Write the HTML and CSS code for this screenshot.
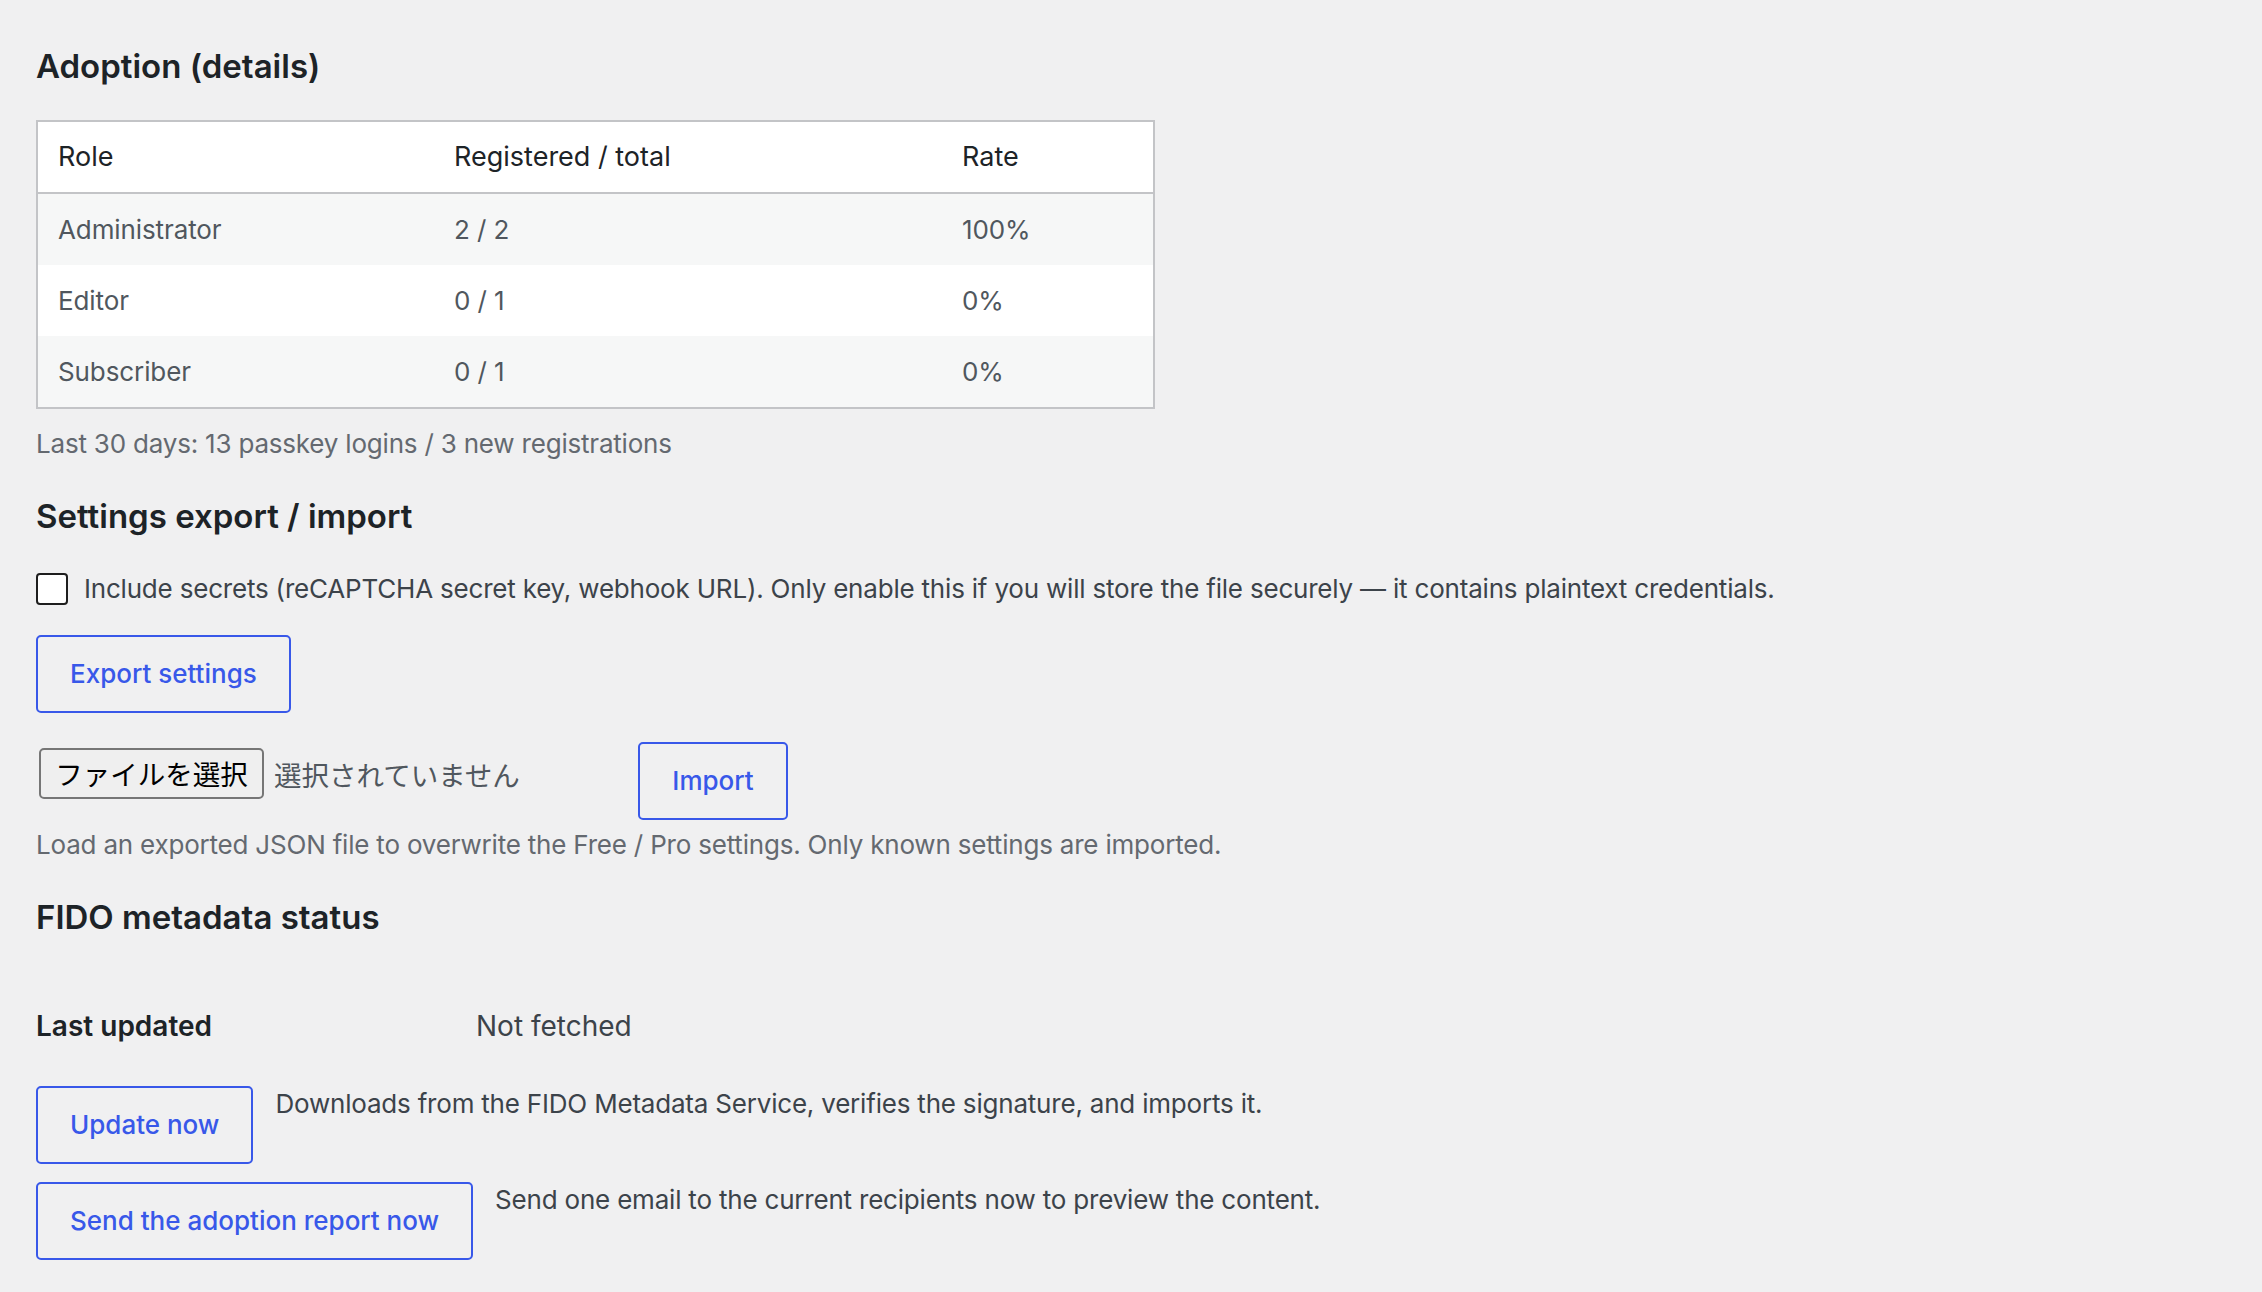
FILE: index.html
```html
<!DOCTYPE html>
<html lang="en">
<head>
<meta charset="utf-8">
<title>Adoption</title>
<link rel="stylesheet" href="styles.css">
</head>
<body>
<div class="wrap">
  <h2 class="title first">Adoption (details)</h2>
  <table class="widefat">
    <thead>
      <tr><th class="c-role">Role</th><th class="c-reg">Registered / total</th><th class="c-rate">Rate</th></tr>
    </thead>
    <tbody>
      <tr class="alt"><td>Administrator</td><td>2 / 2</td><td>100%</td></tr>
      <tr><td>Editor</td><td>0 / 1</td><td>0%</td></tr>
      <tr class="alt"><td>Subscriber</td><td>0 / 1</td><td>0%</td></tr>
    </tbody>
  </table>
  <p class="description stats">Last 30 days: 13 passkey logins / 3 new registrations</p>

  <h2 class="title">Settings export / import</h2>
  <label class="check-row"><span class="checkbox"></span><span>Include secrets (reCAPTCHA secret key, webhook URL). Only enable this if you will store the file securely — it contains plaintext credentials.</span></label>
  <div class="export-row"><button class="button" type="button">Export settings</button></div>
  <div class="import-row">
    <span class="file-input"><span class="file-btn">ファイルを選択</span><span class="file-name">選択されていません</span></span>
    <button class="button" type="button">Import</button>
  </div>
  <p class="description load">Load an exported JSON file to overwrite the Free / Pro settings. Only known settings are imported.</p>

  <h2 class="title">FIDO metadata status</h2>
  <table class="form-table">
    <tr><th>Last updated</th><td>Not fetched</td></tr>
  </table>
  <div class="action-row update"><button class="button" type="button">Update now</button><span class="action-desc">Downloads from the FIDO Metadata Service, verifies the signature, and imports it.</span></div>
  <div class="action-row send"><button class="button" type="button">Send the adoption report now</button><span class="action-desc">Send one email to the current recipients now to preview the content.</span></div>
</div>
</body>
</html>
```
FILE: styles.css
```css
html, body {
  margin: 0;
  padding: 0;
  background: #f0f0f1;
}
body {
  font-family: Inter, "Noto Sans", "Noto Sans CJK JP", sans-serif;
  font-size: 26px;
  line-height: 36px;
  letter-spacing: -0.2px;
  color: #3c434a;
}
.wrap {
  padding: 48px 0 0 36px;
}
.title {
  margin: 36px 0 0;
  font-size: 33px;
  line-height: 36px;
  font-weight: 600;
  letter-spacing: 0;
  color: #1d2327;
}
.title.first { margin-top: 0; }

.widefat {
  margin-top: 36px;
  width: 1119px;
  border: 2px solid #c3c4c7;
  border-collapse: separate;
  border-spacing: 0;
  background: #fff;
}
.widefat th {
  text-align: left;
  font-weight: 400;
  font-size: 27px;
  line-height: 38px;
  letter-spacing: 0;
  color: #1d2327;
  padding: 16px 20px;
  border-bottom: 2px solid #c3c4c7;
}
.widefat td {
  padding: 16px 20px;
  line-height: 39px;
  letter-spacing: -0.1px;
  color: #50575e;
}
.widefat tr.alt td { background: #f6f7f7; }
.c-role { width: 356px; }
.c-reg { width: 468px; }

.description {
  margin: 0;
  color: #646970;
}
.stats { margin-top: 17px; }

.check-row {
  margin-top: 37px;
  display: flex;
  align-items: center;
  gap: 16px;
}
.checkbox {
  width: 28px;
  height: 28px;
  border: 2px solid #1e1e1e;
  border-radius: 4px;
  background: #fff;
  flex: none;
}

.button {
  font-family: inherit;
  font-size: 26px;
  line-height: 36px;
  letter-spacing: 0;
  height: 78px;
  padding: 0 32px;
  color: #3858e9;
  background: transparent;
  border: 2px solid #3858e9;
  border-radius: 5px;
  font-weight: 500;
  cursor: pointer;
}
.export-row { margin-top: 28px; display: flex; }

.import-row {
  margin-top: 29px;
  display: flex;
  align-items: flex-start;
}
.import-row .button { height: 78px; width: 150px; padding: 0; }
.file-input {
  display: flex;
  align-items: center;
  width: 599px;
  margin: 6px 0 0 3px;
}
.file-btn {
  font-family: "Noto Sans CJK JP", sans-serif;
  font-size: 27.5px;
  line-height: 47px;
  letter-spacing: 0;
  padding: 0;
  border: 2px solid #767676;
  border-radius: 5px;
  background: #efefef;
  color: #000;
  width: 221px;
  text-align: center;
}
.file-name {
  font-family: "Noto Sans CJK JP", sans-serif;
  font-size: 27.5px;
  letter-spacing: 0;
  margin-left: 10px;
  color: #50575e;
}
.load { margin-top: 7px; }

.form-table {
  margin-top: 53px;
  border-collapse: collapse;
}
.form-table th {
  text-align: left;
  width: 400px;
  padding: 20px 20px 20px 0;
  font-size: 28px;
  font-weight: 600;
  letter-spacing: 0;
  color: #1d2327;
  line-height: 36px;
}
.form-table td {
  padding: 20px 20px;
  font-size: 28px;
  letter-spacing: 0;
  line-height: 36px;
  color: #3c434a;
}

.action-row {
  display: flex;
  align-items: flex-start;
  gap: 22px;
}
.action-row.update { margin-top: 22px; }
.action-row.send { margin-top: 18px; }
.action-desc { color: #3c434a; }
```
